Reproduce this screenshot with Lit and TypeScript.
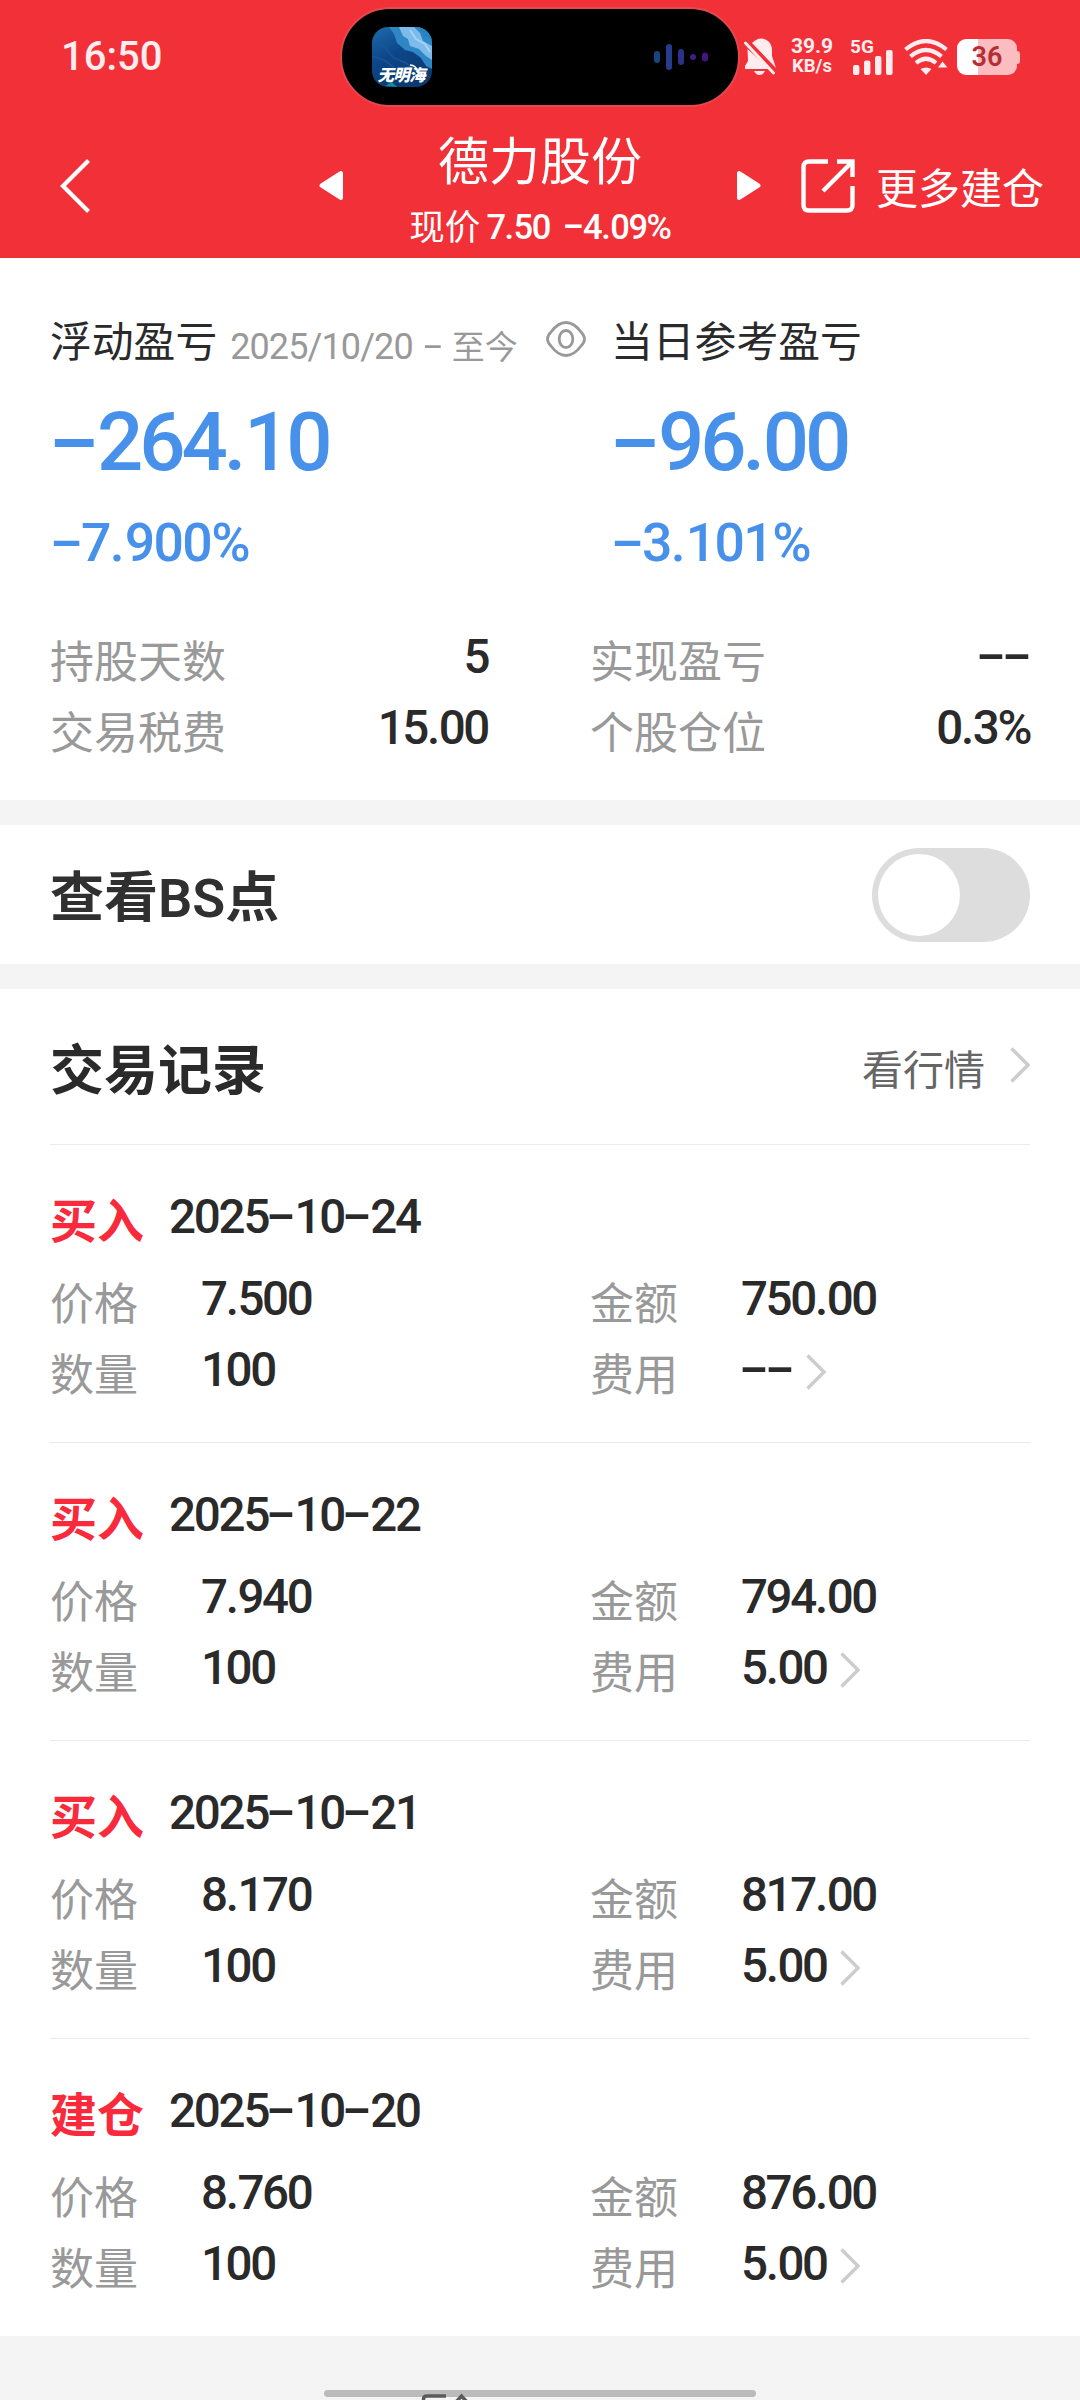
import { LitElement, html, svg, css } from "lit";
import { customElement, property, state } from "lit/decorators.js";

interface Trade {
  kind: string;
  date: string;
  price: string;
  amount: string;
  count: string;
  fee: string;
}

const TRADES: Trade[] = [
  { kind: "买入", date: "2025-10-24", price: "7.500", amount: "750.00", count: "100", fee: "--" },
  { kind: "买入", date: "2025-10-22", price: "7.940", amount: "794.00", count: "100", fee: "5.00" },
  { kind: "买入", date: "2025-10-21", price: "8.170", amount: "817.00", count: "100", fee: "5.00" },
  { kind: "建仓", date: "2025-10-20", price: "8.760", amount: "876.00", count: "100", fee: "5.00" },
];

/** Figures set in even cells: dashes take a full digit width, points keep their own. */
@customElement("num-text")
export class NumText extends LitElement {
  @property() value = "";

  static styles = css`
    :host {
      display: inline-block;
      font-family: Roboto, "Liberation Sans", sans-serif;
      font-weight: 500;
      letter-spacing: var(--track, -0.05em);
      white-space: pre;
    }
    .dash {
      display: inline-block;
      width: 0.552em;
      text-align: center;
      letter-spacing: 0;
      transform: translateY(-0.035em) scale(1.84, 1.05);
    }
    .dot {
      letter-spacing: var(--dot-track, -0.03em);
    }
  `;

  render() {
    return this.value
      .split(/([-.])/)
      .filter((part) => part !== "")
      .map((part) =>
        part === "-"
          ? html`<span class="dash">-</span>`
          : part === "."
            ? html`<span class="dot">.</span>`
            : part
      );
  }
}

const chevron = html`<svg width="20" height="36" viewBox="0 0 20 36" fill="none" stroke="#ccc" stroke-width="3.4">
  <path d="M1.5 1.5L18 18L1.5 34.5" />
</svg>`;

@customElement("status-bar")
export class StatusBar extends LitElement {
  static styles = css`
    :host {
      display: flex;
      position: relative;
      align-items: center;
      height: 114px;
      padding: 0 60px 0 61px;
      box-sizing: border-box;
      font-family: Roboto, "Liberation Sans", sans-serif;
      color: #ffecee;
    }
    svg {
      display: block;
    }
    .time {
      font-size: 40px;
      font-weight: 500;
      line-height: 44px;
    }
    .island {
      position: absolute;
      left: 340px;
      top: 7px;
      width: 400px;
      height: 100px;
      box-sizing: border-box;
      border: 2px solid #e5484f;
      border-radius: 50px;
      background: #000;
      display: flex;
      align-items: center;
      justify-content: space-between;
      padding: 0 30px;
    }
    .icons {
      display: flex;
      align-items: center;
      margin-left: auto;
    }
    .signal {
      overflow: visible;
    }
    .speed {
      display: flex;
      flex-direction: column;
      align-items: center;
      width: 42px;
      margin: 0 17px 0 15px;
      font-weight: 700;
      white-space: nowrap;
    }
    .rate {
      font-size: 21px;
      line-height: 19px;
    }
    .unit {
      font-size: 18.5px;
      line-height: 21px;
    }
    .wifi {
      margin: 0 9px 0 11px;
    }
    .battery {
      display: flex;
      align-items: center;
    }
    .cell {
      width: 60px;
      height: 36px;
      border-radius: 9px;
      background: linear-gradient(90deg, #fff 21px, #fcbdc1 21px);
      color: #b62d35;
      font-size: 27px;
      font-weight: 600;
      line-height: 36px;
      text-align: center;
    }
    .cap {
      width: 3px;
      height: 13px;
      border-radius: 0 3px 3px 0;
      background: #fcbdc1;
    }
  `;

  render() {
    const bars = [
      [0, 51, 12, "#17467f"],
      [12, 44, 26, "#263d8d"],
      [24, 49, 16, "#2e3189"],
      [36, 54, 6, "#3c2184"],
      [48, 52.5, 9, "#45147f"],
    ] as [number, number, number, string][];
    return html`
      <span class="time">16:50</span>
      <div class="island">
        <svg width="60" height="60" viewBox="0 0 60 60">
          <defs>
            <linearGradient id="sea" x1="0" y1="0" x2="0.5" y2="1">
              <stop offset="0" stop-color="#1d6cab" />
              <stop offset="0.5" stop-color="#0d4689" />
              <stop offset="1" stop-color="#0b3a70" />
            </linearGradient>
            <clipPath id="tile"><rect width="60" height="60" rx="16" /></clipPath>
          </defs>
          <g clip-path="url(#tile)">
            <rect width="60" height="60" fill="url(#sea)" />
            <path d="M17 0L22 7L25 16L33 23L41 25L49 31L54 39L60 42V0Z" fill="#2f86c4" />
            <path d="M27 0L31 9L36 12L38 19L47 22L54 29L60 33V19L51 14L48 6L42 0Z" fill="#7dbcea" />
            <path d="M38 3L44 12L53 17L58 25" stroke="#a5d3f5" stroke-width="2" fill="none" />
            <path d="M47 0L51 8L60 13V0Z" fill="#2484bd" />
            <path d="M2 16L12 20L22 31L34 36L43 44M0 29L14 34L24 43" stroke="#155797" stroke-width="1.5" fill="none" />
            <path d="M13 59L20 55L25 60Z" fill="#178a9b" />
            <path d="M38 38Q44 38 46 45" stroke="#fff" stroke-width="1.5" fill="none" />
            <text
              x="6" y="54" fill="#fff" font-size="16.500" font-weight="900"
              font-family="'Noto Sans CJK SC', sans-serif" textLength="48"
              transform="translate(13 0) skewX(-14)"
            >无明海</text>
          </g>
        </svg>
        <svg width="54" height="30" viewBox="0 42 54 30">
          ${bars.map(([x, y, h, c]) => svg`<rect x=${x} y=${y} width="6" height=${h} rx="3" fill=${c} />`)}
        </svg>
      </div>
      <div class="icons">
        <svg width="32" height="38" viewBox="0 0 32 38" fill="#ffecee">
          <path d="M8 5Q16-3 24 3Q28 6 28 13V18L32 30Z" />
          <path d="M3.5 11L26 31H1V28L4 23Z" />
          <path d="M10 33H21Q19 37 15.5 37Q12 37 10 33Z" />
          <path d="M1.5 5L29.5 35" stroke="#ffecee" stroke-width="3" stroke-linecap="round" />
          <path d="M4.5 3.5L32 33" stroke="#f13038" stroke-width="2" />
        </svg>
        <div class="speed"><span class="rate">39.9</span><span class="unit">KB/s</span></div>
        <svg class="signal" width="43" height="36" viewBox="0 0 43 36" fill="#ffecee">
          <text x="0" y="14" font-size="19" font-weight="700" font-family="Roboto, sans-serif">5G</text>
          <rect x="3" y="26" width="6.4" height="10" rx="2" />
          <rect x="14" y="21.5" width="6.4" height="14.5" rx="2" />
          <rect x="25" y="17" width="6.4" height="19" rx="2" />
          <rect x="36" y="11" width="6.6" height="25" rx="2" />
        </svg>
        <svg class="wifi" width="44" height="36" viewBox="0 0 44 36" fill="none" stroke="#ffecee" stroke-width="4.2">
          <path d="M1.5 10.5Q22-6.5 42.5 10.5" />
          <path d="M6.5 17.5Q22 4.5 37.5 17.5" />
          <path d="M12 24Q22 15.5 32 24" />
          <path d="M16.5 30Q22 27 27.5 30L22 36Z" fill="#ffecee" stroke="none" />
          <path d="M34 28.5L38.5 22.5L43.5 28.5Z" fill="#ffecee" stroke="none" />
        </svg>
        <div class="battery"><div class="cell">36</div><div class="cap"></div></div>
      </div>
    `;
  }
}

@customElement("nav-bar")
export class NavBar extends LitElement {
  static styles = css`
    :host {
      display: flex;
      align-items: center;
      height: 144px;
      padding-left: 59px;
      box-sizing: border-box;
      color: #fff;
      font-family: "Noto Sans CJK SC", sans-serif;
      white-space: nowrap;
    }
    svg {
      display: block;
      flex: none;
    }
    .prev {
      margin-left: 229px;
    }
    .heading {
      width: 394px;
      height: 144px;
      padding-top: 14px;
      box-sizing: border-box;
      text-align: center;
    }
    .name {
      font-size: 51px;
      line-height: 60px;
    }
    .quote {
      display: flex;
      align-items: center;
      justify-content: center;
      height: 60px;
      margin-top: 7px;
      font-size: 35.5px;
      line-height: 60px;
    }
    .quote num-text {
      font-size: 34.5px;
      margin: 4px 0 0 6px;
      --track: -0.04em;
      --dot-track: -0.02em;
    }
    .quote num-text + num-text {
      margin-left: 14px;
    }
    .more {
      margin-left: 40px;
    }
    .label {
      margin-left: 21px;
      font-size: 42px;
      line-height: 60px;
    }
  `;

  render() {
    return html`
      <svg width="31" height="54" viewBox="0 0 31 54" fill="none" stroke="#fff" stroke-width="4.2">
        <path d="M29.5 1.5L4 27L29.5 52.5" />
      </svg>
      <svg class="prev" width="24" height="32" viewBox="0 0 24 32" fill="#fff" stroke="#fff" stroke-width="4" stroke-linejoin="round">
        <path d="M2.5 15.5L22 3V28Z" />
      </svg>
      <div class="heading">
        <div class="name">德力股份</div>
        <div class="quote">现价<num-text value="7.50"></num-text><num-text value="-4.09%"></num-text></div>
      </div>
      <svg width="24" height="32" viewBox="0 0 24 32" fill="#fff" stroke="#fff" stroke-width="4" stroke-linejoin="round">
        <path d="M21.5 15.5L2 3V28Z" />
      </svg>
      <svg class="more" width="54" height="54" viewBox="0 0 54 54" fill="none" stroke="#fff" stroke-width="4.4">
        <path d="M27 2.5H8Q2.5 2.5 2.5 8V46Q2.5 51.5 8 51.5H46Q51.5 51.5 51.5 46V27" />
        <path d="M36 2.5H51.5V18M51.5 2.5L22 32" />
      </svg>
      <span class="label">更多建仓</span>
    `;
  }
}

@customElement("pnl-summary")
export class PnlSummary extends LitElement {
  static styles = css`
    :host {
      display: block;
      height: 542px;
      padding: 51px 50px 0;
      box-sizing: border-box;
      background: #fff;
      font-family: "Noto Sans CJK SC", sans-serif;
      color: #2a2a2a;
      white-space: nowrap;
    }
    .top {
      display: grid;
      grid-template-columns: 561px 1fr;
    }
    .caption {
      display: flex;
      align-items: center;
      height: 60px;
      font-size: 41.8px;
      line-height: 60px;
    }
    .range {
      display: flex;
      align-items: center;
      margin: 11px 0 0 13px;
      font-size: 33px;
      line-height: 50px;
      color: #999;
    }
    .range num-text {
      font-size: 36px;
      font-weight: 400;
      margin-top: 4px;
      --track: -0.025em;
    }
    .range num-text + num-text {
      margin: 4px 9px 0 10px;
    }
    .eye {
      margin: 0 0 0 auto;
      padding-right: 25px;
    }
    .blue {
      color: #4791eb;
    }
    .big {
      display: block;
      margin-top: 23px;
      padding-left: 2px;
      font-size: 81.5px;
      line-height: 100px;
    }
    .pct {
      display: block;
      margin-top: 21px;
      padding-left: 1.5px;
      font-size: 53.5px;
      line-height: 60px;
      --track: -0.03em;
      --dot-track: 0;
    }
    .stats {
      display: grid;
      grid-template-columns: 438px 440px;
      column-gap: 102px;
      margin-top: 50px;
    }
    .stat {
      display: flex;
      align-items: center;
      justify-content: space-between;
      height: 71px;
      font-size: 44px;
      line-height: 60px;
    }
    .stat span {
      color: #999;
    }
    .stat num-text {
      font-size: 47.5px;
      padding-bottom: 3px;
    }
  `;

  render() {
    const stats = [
      ["持股天数", "5"],
      ["实现盈亏", "--"],
      ["交易税费", "15.00"],
      ["个股仓位", "0.3%"],
    ];
    return html`
      <div class="top">
        <div>
          <div class="caption">
            浮动盈亏
            <div class="range"><num-text value="2025/10/20"></num-text><num-text value="-"></num-text>至今</div>
            <svg class="eye" width="40" height="36" viewBox="0 0 40 36" fill="none" stroke="#999" stroke-width="2.8">
              <path d="M1.5 18Q1.5 14.5 5 11Q12 1.5 20 1.5Q28 1.5 35 11Q38.5 14.5 38.5 18Q38.5 21.5 35 25Q28 34.5 20 34.5Q12 34.5 5 25Q1.5 21.5 1.5 18Z" />
              <ellipse cx="20" cy="18" rx="6.8" ry="8.5" />
            </svg>
          </div>
          <num-text class="big blue" value="-264.10"></num-text>
          <num-text class="pct blue" value="-7.900%"></num-text>
        </div>
        <div>
          <div class="caption">当日参考盈亏</div>
          <num-text class="big blue" value="-96.00"></num-text>
          <num-text class="pct blue" value="-3.101%"></num-text>
        </div>
      </div>
      <div class="stats">
        ${stats.map(([k, v]) => html`<div class="stat"><span>${k}</span><num-text value=${v}></num-text></div>`)}
      </div>
    `;
  }
}

@customElement("trade-item")
export class TradeItem extends LitElement {
  @property({ attribute: false }) trade!: Trade;

  static styles = css`
    :host {
      display: block;
      height: 298px;
      padding-top: 38px;
      box-sizing: border-box;
      border-top: 1px solid #ebebeb;
      font-family: "Noto Sans CJK SC", sans-serif;
      white-space: nowrap;
    }
    .head {
      display: flex;
      align-items: center;
      height: 70px;
      margin-bottom: 12px;
    }
    .kind {
      font-size: 47px;
      line-height: 60px;
      font-weight: 700;
      color: #f92a3c;
    }
    num-text {
      font-size: 47.5px;
      padding-bottom: 3px;
      color: #2a2a2a;
    }
    .head num-text {
      margin-left: 25px;
      --track: -0.046em;
    }
    .grid {
      display: grid;
      grid-template-columns: 151px 389px 151px 1fr;
      grid-auto-rows: 71px;
      align-items: center;
    }
    .key {
      font-size: 44px;
      line-height: 60px;
      color: #999;
    }
    .fee {
      display: flex;
      align-items: center;
      gap: 13px;
    }
  `;

  render() {
    const t = this.trade;
    return html`
      <div class="head"><span class="kind">${t.kind}</span><num-text value=${t.date}></num-text></div>
      <div class="grid">
        <span class="key">价格</span><num-text value=${t.price}></num-text>
        <span class="key">金额</span><num-text value=${t.amount}></num-text>
        <span class="key">数量</span><num-text value=${t.count}></num-text>
        <span class="key">费用</span>
        <div class="fee"><num-text value=${t.fee}></num-text>${chevron}</div>
      </div>
    `;
  }
}

@customElement("app-root")
export class AppRoot extends LitElement {
  @state() private showPoints = false;

  static styles = css`
    :host {
      display: block;
      position: relative;
      width: 1080px;
      height: 2400px;
      overflow: hidden;
      background: #f4f4f4;
      font-family: "Noto Sans CJK SC", sans-serif;
      color: #2a2a2a;
      white-space: nowrap;
    }
    header {
      background: #f13038;
    }
    .points {
      display: flex;
      align-items: center;
      justify-content: space-between;
      height: 139px;
      margin: 25px 0;
      padding: 0 50px;
      background: #fff;
      color: #303030;
    }
    .title {
      font-size: 54px;
      line-height: 70px;
      font-weight: 700;
    }
    .points .title {
      padding-top: 3px;
    }
    .latin {
      font-family: Roboto, "Liberation Sans", sans-serif;
      font-weight: 600;
    }
    .switch {
      width: 158px;
      height: 94px;
      padding: 6px;
      border: 0;
      border-radius: 47px;
      background: #ddd;
      display: flex;
      box-sizing: border-box;
      margin-top: 1px;
    }
    .switch.on {
      justify-content: flex-end;
      background: #f13038;
    }
    .knob {
      width: 82px;
      height: 82px;
      border-radius: 50%;
      background: #fff;
    }
    .records {
      padding: 0 50px;
      background: #fff;
    }
    .bar {
      display: flex;
      align-items: center;
      justify-content: space-between;
      height: 155px;
    }
    .link {
      display: flex;
      align-items: center;
      gap: 25px;
      font-size: 41px;
      line-height: 60px;
      color: #666;
    }
    .link svg {
      margin-top: -3px;
    }
    .home {
      position: absolute;
      left: 324px;
      top: 2390px;
      width: 432px;
      height: 7px;
      border-radius: 4px;
      background: #bbb;
    }
    .peek {
      position: absolute;
      left: 420px;
      top: 2393px;
    }
  `;

  render() {
    return html`
      <header>
        <status-bar></status-bar>
        <nav-bar></nav-bar>
      </header>
      <pnl-summary></pnl-summary>
      <section class="points">
        <span class="title">查看<span class="latin">BS</span>点</span>
        <button
          class="switch ${this.showPoints ? "on" : ""}"
          @click=${() => (this.showPoints = !this.showPoints)}
        ><span class="knob"></span></button>
      </section>
      <section class="records">
        <div class="bar">
          <span class="title">交易记录</span>
          <span class="link">看行情${chevron}</span>
        </div>
        ${TRADES.map((t) => html`<trade-item .trade=${t}></trade-item>`)}
      </section>
      <div class="home"></div>
      <svg class="peek" width="50" height="7" viewBox="0 0 50 7" fill="none" stroke="#5a5a5a" stroke-width="3.5">
        <path d="M3.5 8V6Q3.5 3 7 3H26M36 9L41.5 3L47 9" />
      </svg>
    `;
  }
}
